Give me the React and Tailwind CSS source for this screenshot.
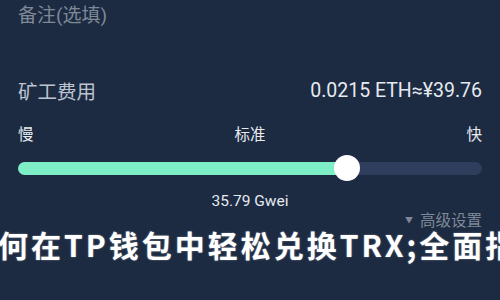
import React from 'react';

function App() {
    const percent = 70.8;

    return (
        <div
            className="w-[500px] h-[300px] overflow-hidden bg-[#1c2b42] relative"
            style={{ fontFamily: 'Roboto, "Noto Sans CJK SC", sans-serif' }}
        >
            <div className="px-[18px]">
                <div className="pt-[5px] text-[19px] leading-[22px] text-[#7f8897]">备注(选填)</div>

                <div className="mt-[51px] flex items-center justify-between h-[26px]">
                    <span className="text-[19.5px] leading-[26px] text-[#bcc4d0] mt-[3px]">矿工费用</span>
                    <span className="text-[19.5px] leading-[26px] text-[#e6eaf0]">0.0215 ETH≈¥39.76</span>
                </div>

                <div className="mt-[21px] flex items-center justify-between text-[15.5px] leading-[20px] text-[#e6eaf0]">
                    <span>慢</span>
                    <span>标准</span>
                    <span>快</span>
                </div>

                <div className="mt-[10px] relative h-[26px] flex items-center">
                    <div className="w-full h-[13px] rounded-full bg-[#2f3e5c] overflow-hidden">
                        <div className="h-full bg-[#7deec5]" style={{ width: `${percent}%` }} />
                    </div>
                    <div
                        className="absolute top-0 w-[26px] h-[26px] rounded-full bg-white -translate-x-1/2"
                        style={{ left: `${percent}%` }}
                    />
                </div>

                <div className="mt-[10px] text-center text-[15.5px] leading-[20px] text-[#e6eaf0]">35.79 Gwei</div>

                <div className="flex justify-end items-center gap-[7px] text-[15.5px] leading-[20px] text-[#7f8897]">
                    <span className="text-[8px]">▼</span>
                    <span>高级设置</span>
                </div>
            </div>

            <div
                className="absolute left-[-35px] top-[226px] whitespace-nowrap text-[30px] leading-[36px] font-bold text-white tracking-[3px]"
                style={{ fontFamily: '"Noto Sans CJK SC", sans-serif', textShadow: '0 0 2px rgba(255,255,255,0.4)' }}
            >
                如何在TP钱包中轻松兑换TRX;全面指南
            </div>
        </div>
    );
}

export default App;
